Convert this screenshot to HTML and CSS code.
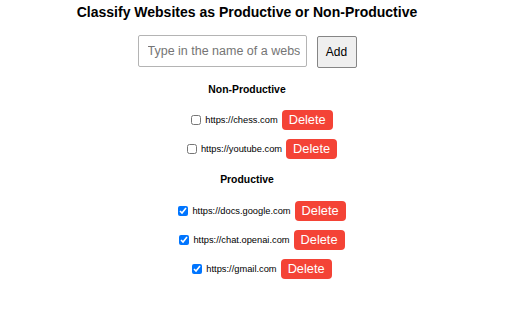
FILE: index.html
```html
<!DOCTYPE html>
<html>
<head>
<meta charset="utf-8">
<link rel="stylesheet" href="styles.css">
</head>
<body>
<div class="app">
  <h1 class="title">Classify Websites as Productive or Non-Productive</h1>
  <div class="add-row">
    <input class="site-input" type="text" placeholder="Type in the name of a website">
    <button class="add-btn">Add</button>
  </div>
  <h2 class="section-title">Non-Productive</h2>
  <ul class="site-list">
    <li class="site"><input class="check" type="checkbox"><span class="url">https://chess.com</span><button class="del-btn">Delete</button></li>
    <li class="site"><input class="check" type="checkbox"><span class="url">https://youtube.com</span><button class="del-btn">Delete</button></li>
  </ul>
  <h2 class="section-title">Productive</h2>
  <ul class="site-list">
    <li class="site"><input class="check" type="checkbox" checked><span class="url">https://docs.google.com</span><button class="del-btn">Delete</button></li>
    <li class="site"><input class="check" type="checkbox" checked><span class="url">https://chat.openai.com</span><button class="del-btn">Delete</button></li>
    <li class="site"><input class="check" type="checkbox" checked><span class="url">https://gmail.com</span><button class="del-btn">Delete</button></li>
  </ul>
</div>
</body>
</html>
```
FILE: styles.css
```css
html, body {
  margin: 0;
  padding: 0;
  background: #fff;
}
body {
  font-family: "Liberation Sans", Arial, sans-serif;
  color: #000;
}
.app {
  width: 494px;
  display: flex;
  flex-direction: column;
  align-items: center;
}
.title {
  margin: 4px 0 15px;
  font-size: 14px;
  line-height: 16px;
  font-weight: bold;
}
.add-row {
  display: flex;
  gap: 10px;
  align-items: flex-start;
}
.site-input {
  box-sizing: border-box;
  width: 169px;
  height: 32px;
  margin: 0;
  padding: 0 6px 0 9px;
  border: 1px solid #b4b4b4;
  border-radius: 2px;
  font-family: "Liberation Sans", Arial, sans-serif;
  font-size: 12.5px;
  color: #000;
  outline: none;
}
.site-input::placeholder {
  color: #757575;
}
.add-btn {
  box-sizing: border-box;
  width: 40px;
  height: 32px;
  margin: 1px 0 0;
  padding: 0;
  border: 1px solid #858585;
  border-radius: 2px;
  background: #efefef;
  font-family: "Liberation Sans", Arial, sans-serif;
  font-size: 12px;
  color: #000;
}
.section-title {
  margin: 16px 0 14px;
  font-size: 10.4px;
  line-height: 12px;
  font-weight: bold;
}
.site-list + .section-title {
  margin-top: 15px;
  margin-bottom: 15px;
}
.site-list {
  list-style: none;
  margin: 0;
  padding: 0 0 0 27px;
  display: flex;
  flex-direction: column;
  align-items: center;
  gap: 9px;
}
.site {
  display: flex;
  align-items: center;
  height: 20px;
}
.check {
  width: 10px;
  height: 10px;
  margin: 0 4px 0 3px;
  accent-color: #0075ff;
}
.url {
  font-size: 9.3px;
  line-height: 12px;
}
.del-btn {
  box-sizing: border-box;
  height: 20px;
  margin-left: 4px;
  padding: 0 7px;
  border: none;
  border-radius: 4px;
  background: #f44336;
  color: #fff;
  font-family: "Liberation Sans", Arial, sans-serif;
  font-size: 12.8px;
  line-height: 20px;
}
```
